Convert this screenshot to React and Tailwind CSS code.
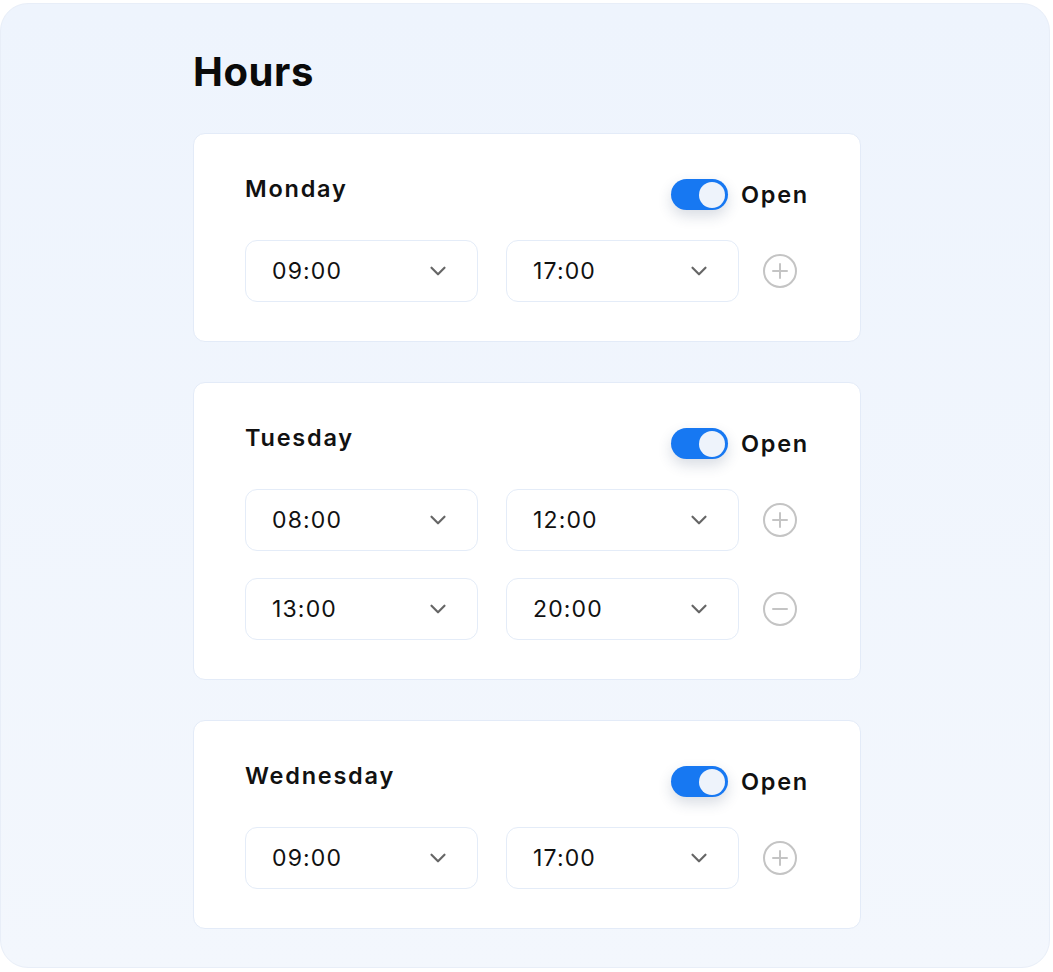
import { ChevronDown } from 'lucide-react'

const days = [
  { name: 'Monday', slots: [['09:00', '17:00']] },
  { name: 'Tuesday', slots: [['08:00', '12:00'], ['13:00', '20:00']] },
  { name: 'Wednesday', slots: [['09:00', '17:00']] },
]

function CircleIcon({ minus }) {
  return (
    <svg width="36" height="36" viewBox="0 0 36 36" fill="none" stroke="#c4c4c4" strokeWidth="2" strokeLinecap="round">
      <circle cx="18" cy="18" r="16" />
      <path d="M11 18h14" />
      {!minus && <path d="M18 11v14" />}
    </svg>
  )
}

function Toggle() {
  return (
    <div className="w-[57px] h-[31px] rounded-full bg-[#1778f2] flex items-center justify-end pr-[3px] shadow-[0_6px_14px_rgba(40,60,100,0.18)]">
      <div className="w-[26px] h-[26px] rounded-full bg-[#eef3fb]" />
    </div>
  )
}

function TimeSelect({ value }) {
  return (
    <div className="w-[233px] h-[62px] rounded-[12px] border border-[#e4ecf8] bg-white flex items-center justify-between pl-[26px] pr-[26px]">
      <span className="text-[23px] tracking-[0.05em] text-[#111]">{value}</span>
      <ChevronDown size={26} strokeWidth={2} className="text-[#666]" />
    </div>
  )
}

function DayCard({ name, slots }) {
  return (
    <div className="bg-white rounded-[12px] border border-[#e3ebf8] pt-[40px] px-[51px] pb-[39px]">
      <div className="flex justify-between items-start mb-[30px]">
        <span className="text-[23.5px] leading-[30px] font-semibold tracking-[0.075em] text-[#111]">{name}</span>
        <div className="flex items-center gap-[13px] mt-[5px]">
          <Toggle />
          <span className="text-[23.5px] leading-[31px] font-semibold tracking-[0.075em] text-[#111]">Open</span>
        </div>
      </div>
      <div className="flex flex-col gap-[27px]">
        {slots.map(([from, to], i) => (
          <div key={i} className="flex items-center">
            <TimeSelect value={from} />
            <div className="ml-[28px]">
              <TimeSelect value={to} />
            </div>
            <div className="ml-[23px]">
              <CircleIcon minus={i > 0} />
            </div>
          </div>
        ))}
      </div>
    </div>
  )
}

export default function App() {
  return (
    <div className="bg-white w-[1053px] h-[972px] pt-[3px]" style={{ fontFamily: 'Inter, "Noto Sans", sans-serif' }}>
      <div className="w-[1050px] h-[965px] rounded-[28px] bg-gradient-to-b from-[#eef4fd] to-[#f3f7fd] border border-[#e8eef8] pt-[46px] pl-[192px]">
        <h1 className="text-[40px] leading-[44px] font-bold tracking-[0.015em] text-[#0a0a0a] mb-[39px]">Hours</h1>
        <div className="w-[668px] flex flex-col gap-[40px]">
          {days.map((d) => (
            <DayCard key={d.name} {...d} />
          ))}
        </div>
      </div>
    </div>
  )
}
